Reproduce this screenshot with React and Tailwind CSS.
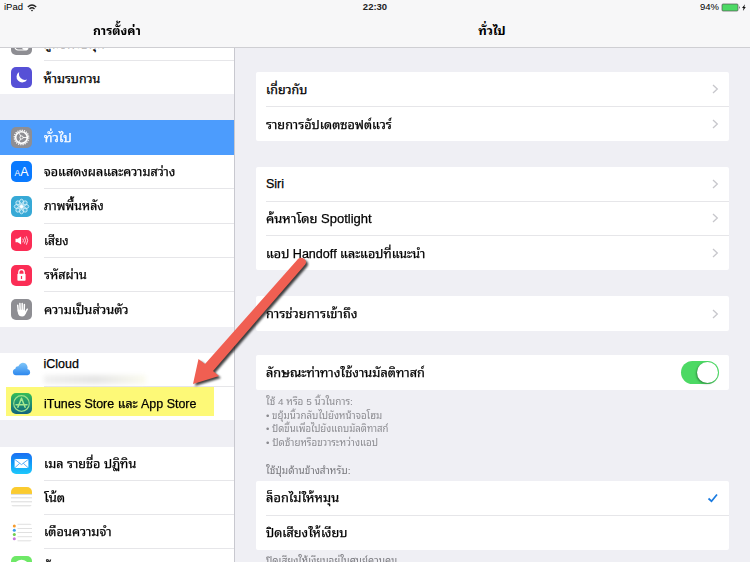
import React, { useLayoutEffect, useRef, useState } from "react";

const FONT =
  "font-['Liberation_Sans','Noto_Sans_Thai_Looped','Noto_Looped_Thai','Loma','Garuda','Waree','Umpush','Noto_Sans_Thai','Noto_Sans',sans-serif]";

// Scales a label horizontally so that it takes the given width in any Thai face.
function Fit({ w, children }) {
  const ref = useRef(null);
  const [scale, setScale] = useState(1);
  useLayoutEffect(() => {
    const natural = ref.current.offsetWidth;
    if (natural) setScale(w / natural);
  }, [w]);
  return (
    <span ref={ref} className="inline-block origin-left whitespace-nowrap" style={{ transform: `scaleX(${scale})` }}>
      {children}
    </span>
  );
}

function Tile({ className = "", children }) {
  return (
    <span className={`block h-[21px] w-[21px] shrink-0 overflow-hidden rounded-[5px] ${className}`}>
      <svg viewBox="0 0 21 21" className="block h-full w-full">{children}</svg>
    </span>
  );
}

const ControlIcon = () => (
  <Tile className="bg-[#8e8e93]">
    <rect x="4" y="10" width="13" height="6" rx="3" fill="none" stroke="#fff" strokeWidth="1.2" />
    <circle cx="14" cy="13" r="3" fill="#fff" />
  </Tile>
);
const MoonIcon = () => (
  <Tile className="bg-[#5650d6]">
    <path d="M8.2 4.9a5.7 5.7 0 1 0 8 7.6A6.2 6.2 0 0 1 8.2 4.9z" fill="#fff" />
  </Tile>
);
const GearIcon = () => (
  <Tile className="bg-[#8e8e93]">
    <circle cx="10.5" cy="10.5" r="7.2" fill="none" stroke="#fff" strokeWidth="1.3" strokeDasharray="1.2 1.06" />
    <circle cx="10.5" cy="10.5" r="5.8" fill="none" stroke="#fff" strokeWidth="1.6" />
    <circle cx="10.5" cy="10.5" r="1.6" fill="none" stroke="#fff" strokeWidth="0.9" />
    <path d="M12 10.5h4M9.8 9.2L7.7 5.5M9.8 11.8l-2.1 3.7" stroke="#fff" strokeWidth="0.9" />
  </Tile>
);
const DisplayIcon = () => (
  <Tile className="bg-[#0a7aff]">
    <text x="3.4" y="14.6" fontSize="8.5" fill="#fff">A</text>
    <text x="9.2" y="14.6" fontSize="12.5" fill="#fff">A</text>
  </Tile>
);
const WallpaperIcon = () => (
  <Tile className="bg-[#37a9d6]">
    {[0, 45, 90, 135, 180, 225, 270, 315].map((a) => (
      <ellipse key={a} cx="10.5" cy="6.4" rx="2.1" ry="3.2" fill="#ffffff22" stroke="#d9f3fc" strokeWidth="0.8" transform={`rotate(${a} 10.5 10.5)`} />
    ))}
    <circle cx="10.5" cy="10.5" r="1.5" fill="#fff" />
  </Tile>
);
const SoundIcon = () => (
  <Tile className="bg-[#fb2d55]">
    <path d="M4.5 8.7h2.2l3.4-2.2v8l-3.4-2.2H4.5z" fill="#fff" />
    <path d="M11.8 8.6q1.2 1.9 0 3.8M13.5 7.4q2 3.1 0 6.2M15.3 6.3q2.8 4.2 0 8.4" fill="none" stroke="#fff" strokeWidth="0.8" />
  </Tile>
);
const LockIcon = () => (
  <Tile className="bg-[#fb2d55]">
    <path d="M7.8 9V7.3a2.7 2.7 0 0 1 5.4 0V9" fill="none" stroke="#fff" strokeWidth="1.3" />
    <rect x="6.4" y="8.8" width="8.2" height="7" rx="0.8" fill="#fff" />
    <path d="M10.5 11v3" stroke="#fb2d55" strokeWidth="1.2" />
  </Tile>
);
const HandIcon = () => (
  <Tile className="bg-[#8e8e93]">
    <g stroke="#fff" strokeWidth="1.5" strokeLinecap="round" fill="none">
      <path d="M6.7 6.3l.6 6M8.9 4.6l.3 7M11.2 4.4v7M13.4 5.6l-.3 7M16.3 10.2l-2.3 4" />
    </g>
    <path d="M6.5 10.8h7.4l.6 2.4 1-.8q-1.5 5.2-4.3 5.2-3.6 0-4.3-3.6z" fill="#fff" />
  </Tile>
);
const CloudIcon = () => (
  <Tile>
    <defs>
      <linearGradient id="cloud" x1="0" y1="0" x2="0" y2="1">
        <stop offset="0" stopColor="#7fc5f8" />
        <stop offset="1" stopColor="#2c87ee" />
      </linearGradient>
    </defs>
    <path d="M5 16.300a3.300 3.300 0 0 1-.6-6.500 2.600 2.600 0 0 1 3-2.600 4.700 4.700 0 0 1 9 2.800 3.200 3.200 0 0 1 .2 6.300z" fill="url(#cloud)" />
  </Tile>
);
const StoreIcon = () => (
  <Tile className="bg-linear-to-b from-[#35bd55] to-[#14637c]">
    <circle cx="10.5" cy="10.5" r="7.8" fill="none" stroke="#9be08b" strokeWidth="1.2" />
    <path d="M10.5 5.2l-3.6 9M10.5 5.2l3.6 9M5 11.8h11" fill="none" stroke="#a5e890" strokeWidth="1.5" strokeLinecap="round" />
  </Tile>
);
const MailIcon = () => (
  <Tile className="bg-linear-to-b from-[#1c6df2] to-[#1fc8fb]">
    <rect x="3.6" y="6" width="13.8" height="9" rx="1" fill="#fff" />
    <path d="M4 6.6l6.5 5 6.5-5M4 14.6l4.7-4.3M17 14.6l-4.7-4.3" fill="none" stroke="#3a9cf6" strokeWidth="0.8" />
  </Tile>
);
const NotesIcon = () => (
  <Tile className="bg-white">
    <rect width="21" height="7" fill="#fbcb2f" />
    <path d="M0 7.4h21M0 10.8h21M0 14.8h21M0 18.8h21" stroke="#d6d6d6" strokeWidth="0.9" />
  </Tile>
);
const RemindersIcon = () => (
  <Tile className="bg-white">
    <path d="M6.5 2.3h14.5M6.5 6.5h14.5M6.5 10.5h14.5M6.5 14.7h14.5M6.5 18.8h14.5" stroke="#d8d8d8" strokeWidth="0.8" />
    <circle cx="3.3" cy="4" r="1.5" fill="#f59b2c" />
    <circle cx="3.3" cy="8.2" r="1.5" fill="#3a9df0" />
    <circle cx="3.3" cy="12.4" r="1.5" fill="#6fcf4d" />
    <circle cx="3.3" cy="16.7" r="1.5" fill="#c874dc" />
  </Tile>
);
const MessagesIcon = () => (
  <Tile className="bg-[#6ee867]">
    <ellipse cx="10.5" cy="9.8" rx="7" ry="6" fill="#fff" />
  </Tile>
);

function Item({ icon, label, w, height = "h-[34.4px]", last }) {
  return (
    <div className={`flex shrink-0 items-center pl-[11px] ${height}`}>
      {icon}
      <div className={`ml-[11.5px] flex h-full flex-1 items-center whitespace-nowrap pt-[2px] text-[12.5px] [-webkit-text-stroke:0.25px] ${last ? "" : "border-b border-[#e6e6e9]"}`}>
        {w ? <Fit w={w}>{label}</Fit> : label}
      </div>
    </div>
  );
}

const Chevron = () => (
  <svg viewBox="0 0 8 12" className="h-[12px] w-[8px]">
    <path d="M2 2L6.300 6l-4.300 4" fill="none" stroke="#c7c7cc" strokeWidth="1.3" />
  </svg>
);

function Row({ label, w, last, accessory = <Chevron /> }) {
  return (
    <div className="h-[34.4px] pl-[10px]">
      <div className={`flex h-full items-center justify-between whitespace-nowrap pr-[10px] text-[12.5px] [-webkit-text-stroke:0.25px] ${last ? "" : "border-b border-[#e6e6e9]"}`}>
        <span className="pt-[2px]"><Fit w={w}>{label}</Fit></span>
        {accessory}
      </div>
    </div>
  );
}

const Card = ({ className = "", children }) => (
  <div className={`ml-[21px] w-[473px] shrink-0 rounded-[2px] bg-white ${className}`}>{children}</div>
);

export default function App() {
  return (
    <div className={`relative flex h-[562px] w-[750px] flex-col overflow-hidden bg-[#efeff4] text-black ${FONT}`}>
      <header className="flex h-[48px] shrink-0 flex-col border-b border-[#cfcfd3] bg-[#f7f7f8]">
        <div className="flex h-[15px] items-center text-[9.5px]">
          <div className="flex flex-1 items-center gap-[4px] pl-[4px]">
            <span>iPad</span>
            <svg viewBox="0 0 10 8" className="h-[8px] w-[10px]" fill="none" stroke="#222" strokeWidth="1.3">
              <path d="M.8 3Q5-.9 9.2 3M2.5 5Q5 2.6 7.5 5" />
              <path d="M3.9 6.2q1.1-.9 2.2 0L5 7.4z" fill="#222" stroke="none" />
            </svg>
          </div>
          <span className="font-bold text-[#222]">22:30</span>
          <div className="flex flex-1 items-center justify-end gap-[2px] pr-[4px]">
            <span>94%</span>
            <svg viewBox="0 0 25 9" className="h-[9px] w-[25px]">
              <rect x="1" y="1" width="16" height="7" rx="1" fill="#4cd964" stroke="#555" strokeWidth="0.7" />
              <path d="M18 3q1.3 1.5 0 3z" fill="#222" />
              <path d="M24 1.2l-3 3.8h1.5l-.6 3L24.8 4h-1.5z" fill="#111" />
            </svg>
          </div>
        </div>
        <div className="flex h-[32px] items-center pt-[1px] text-[12.5px] font-bold">
          <h1 className="w-[234px] text-center"><Fit w={48}>การตั้งค่า</Fit></h1>
          <h2 className="flex-1 text-center"><Fit w={27}>ทั่วไป</Fit></h2>
        </div>
      </header>

      <div className="flex min-h-0 flex-1">
        <aside className="flex w-[235px] shrink-0 flex-col overflow-hidden border-r border-[#c8c8cf]">
          <div className="-mt-[21px] shrink-0 bg-white">
            <Item icon={<ControlIcon />} label="ศูนย์ควบคุม" w={61} />
            <Item icon={<MoonIcon />} label="ห้ามรบกวน" w={57} height="h-[33px]" last />
          </div>
          <div className="mt-[26px] shrink-0 bg-white">
            <div className="bg-[#4c9cfd] text-white"><Item icon={<GearIcon />} label="ทั่วไป" w={27.5} last /></div>
            <Item icon={<DisplayIcon />} label="จอแสดงผลและความสว่าง" w={131} />
            <Item icon={<WallpaperIcon />} label="ภาพพื้นหลัง" w={59.5} />
            <Item icon={<SoundIcon />} label="เสียง" w={25} />
            <Item icon={<LockIcon />} label="รหัสผ่าน" w={42.5} />
            <Item icon={<HandIcon />} label="ความเป็นส่วนตัว" w={84} last />
          </div>
          <div className="mt-[26px] h-[67px] shrink-0 bg-white">
            <Item
              icon={<CloudIcon />}
              label={
                <div className="flex flex-col">
                  <span className="leading-[16px]">iCloud</span>
                  <span className="mt-[3px] h-[9px] w-[102px] bg-linear-to-r from-[#f1f1f1] via-[#e6e6e6] to-[#fbfbf0] blur-[2px]" />
                </div>
              }
            />
            <div className="ml-[6px] h-[29px] w-[208px] bg-[#fdf977]">
              <div className="-ml-[6px] h-full pt-[1px]">
                <Item icon={<StoreIcon />} label="iTunes Store และ App Store" w={152.5} height="h-[31px]" last />
              </div>
            </div>
          </div>
          <div className="mt-[27.4px] shrink-0 bg-white">
            <Item icon={<MailIcon />} label="เมล รายชื่อ ปฏิทิน" w={92} height="h-[33.4px]" />
            <Item icon={<NotesIcon />} label="โน้ต" w={21} />
            <Item icon={<RemindersIcon />} label="เตือนความจำ" w={67.5} />
            <Item icon={<MessagesIcon />} label="ข้อความ" w={45} />
          </div>
        </aside>

        <main className="flex min-w-0 flex-1 flex-col overflow-hidden">
          <Card className="mt-[24.4px]">
            <Row label="เกี่ยวกับ" w={41} />
            <Row label="รายการอัปเดตซอฟต์แวร์" w={126} last />
          </Card>
          <Card className="mt-[26px]">
            <Row label="Siri" w={18} />
            <Row label="ค้นหาโดย Spotlight" w={106} />
            <Row label="แอป Handoff และแอปที่แนะนำ" w={159} last />
          </Card>
          <Card className="mt-[26px]">
            <Row label="การช่วยการเข้าถึง" w={92} last />
          </Card>
          <Card className="mt-[24.5px]">
            <Row
              label="ลักษณะท่าทางใช้งานมัลติทาสก์"
              w={159}
              last
              accessory={
                <span className="flex h-[23px] w-[38px] items-center justify-end rounded-full bg-[#4cd964] p-[1px]">
                  <span className="h-[21px] w-[21px] rounded-full bg-white shadow-[-1px_1px_2px_rgba(0,0,0,0.35)]" />
                </span>
              }
            />
          </Card>
          <div className="mt-[5px] ml-[31px] shrink-0 whitespace-nowrap text-[9.5px] leading-[13.9px] text-[#8b8b90]">
            <p><Fit w={87}>ใช้ 4 หรือ 5 นิ้วในการ:</Fit></p>
            <p><Fit w={116}>• ขยุ้มนิ้วกลับไปยังหน้าจอโฮม</Fit></p>
            <p><Fit w={122}>• ปัดขึ้นเพื่อไปยังแถบมัลติทาสก์</Fit></p>
            <p><Fit w={112}>• ปัดซ้ายหรือขวาระหว่างแอป</Fit></p>
            <p className="mt-[13.5px] text-[#77777c]"><Fit w={84.5}>ใช้ปุ่มด้านข้างสำหรับ:</Fit></p>
          </div>
          <Card className="mt-[3.5px]">
            <Row
              label="ล็อกไม่ให้หมุน"
              w={73}
              accessory={
                <svg viewBox="0 0 12 10" className="h-[10px] w-[12px]">
                  <path d="M1.5 5.5l3 2.7L10 1.5" fill="none" stroke="#1a7be0" strokeWidth="1.7" />
                </svg>
              }
            />
            <Row label="ปิดเสียงให้เงียบ" w={81} accessory={null} last />
          </Card>
          <p className="mt-[4px] ml-[31px] shrink-0 whitespace-nowrap text-[9.5px] leading-[14px] text-[#77777c]">
            <Fit w={131}>ปิดเสียงให้เงียบอยู่ในศูนย์ควบคุม</Fit>
          </p>
        </main>
      </div>

      <svg viewBox="0 0 750 562" className="pointer-events-none absolute inset-0 h-full w-full">
        <path
          d="M193 384l5.500-25 6.500 5L298 259q2.600-2.600 6-.2t1.200 5.700L213 371l6 5z"
          fill="#f05f52"
          className="drop-shadow-[2px_2px_1px_rgba(0,0,0,0.75)]"
        />
      </svg>
    </div>
  );
}
